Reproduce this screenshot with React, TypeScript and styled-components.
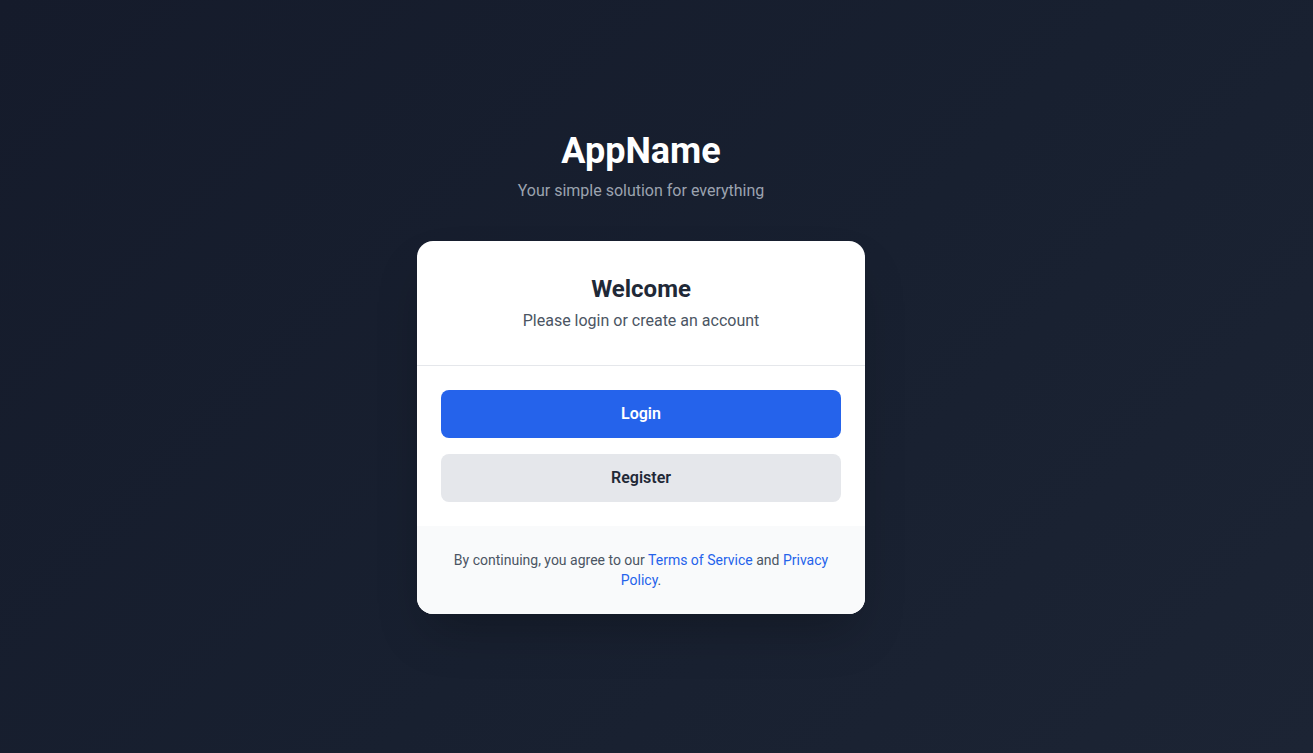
import React from 'react';
import styled, { createGlobalStyle } from 'styled-components';

const GlobalStyle = createGlobalStyle`
  * { box-sizing: border-box; }
  html, body { margin: 0; padding: 0; }
  body {
    font-family: "Segoe UI", Roboto, "Noto Sans", sans-serif;
    -webkit-font-smoothing: antialiased;
  }
`;

const Page = styled.div`
  min-height: 100vh;
  display: flex;
  flex-direction: column;
  align-items: center;
  justify-content: center;
  padding: 0 31px 8px 0;
  background: linear-gradient(135deg, #151b2b 0%, #182030 55%, #1c2434 100%);
`;

const Brand = styled.div`
  text-align: center;
  margin-bottom: 38px;
`;

const AppTitle = styled.h1`
  margin: 0;
  font-size: 36px;
  line-height: 40px;
  font-weight: 700;
  color: #ffffff;
`;

const Tagline = styled.p`
  margin: 8px 0 0;
  font-size: 16px;
  line-height: 24px;
  color: #9ca3af;
`;

const Card = styled.div`
  width: 100%;
  max-width: 448px;
  background: #ffffff;
  border-radius: 16px;
  overflow: hidden;
  box-shadow: 0 25px 50px -12px rgba(0, 0, 0, 0.25);
`;

const CardHeader = styled.div`
  padding: 32px;
  text-align: center;
  border-bottom: 1px solid #e5e7eb;
`;

const Heading = styled.h2`
  margin: 0;
  font-size: 24px;
  line-height: 32px;
  font-weight: 700;
  color: #1f2937;
`;

const SubHeading = styled.p`
  margin: 4px 0 0;
  font-size: 16px;
  line-height: 24px;
  color: #4b5563;
`;

const Actions = styled.div`
  padding: 24px;
  display: flex;
  flex-direction: column;
  gap: 16px;
`;

const Button = styled.button<{ $variant: 'primary' | 'secondary' }>`
  width: 100%;
  border: none;
  border-radius: 8px;
  padding: 12px 16px;
  font-family: inherit;
  font-size: 16px;
  line-height: 24px;
  font-weight: 600;
  cursor: pointer;
  background: ${p => (p.$variant === 'primary' ? '#2563eb' : '#e5e7eb')};
  color: ${p => (p.$variant === 'primary' ? '#ffffff' : '#1f2937')};
`;

const Footer = styled.div`
  background: #f9fafb;
  padding: 24px;
  text-align: center;
  font-size: 14px;
  line-height: 20px;
  color: #4b5563;
`;

const Link = styled.a`
  color: #2563eb;
  text-decoration: none;
`;

function App() {
  return (
    <>
      <GlobalStyle />
      <Page>
        <Brand>
          <AppTitle>AppName</AppTitle>
          <Tagline>Your simple solution for everything</Tagline>
        </Brand>

        <Card>
          <CardHeader>
            <Heading>Welcome</Heading>
            <SubHeading>Please login or create an account</SubHeading>
          </CardHeader>

          <Actions>
            <Button $variant="primary">Login</Button>
            <Button $variant="secondary">Register</Button>
          </Actions>

          <Footer>
            By continuing, you agree to our <Link href="#">Terms of Service</Link> and{' '}
            <Link href="#">Privacy Policy</Link>.
          </Footer>
        </Card>
      </Page>
    </>
  );
}

export default App;
